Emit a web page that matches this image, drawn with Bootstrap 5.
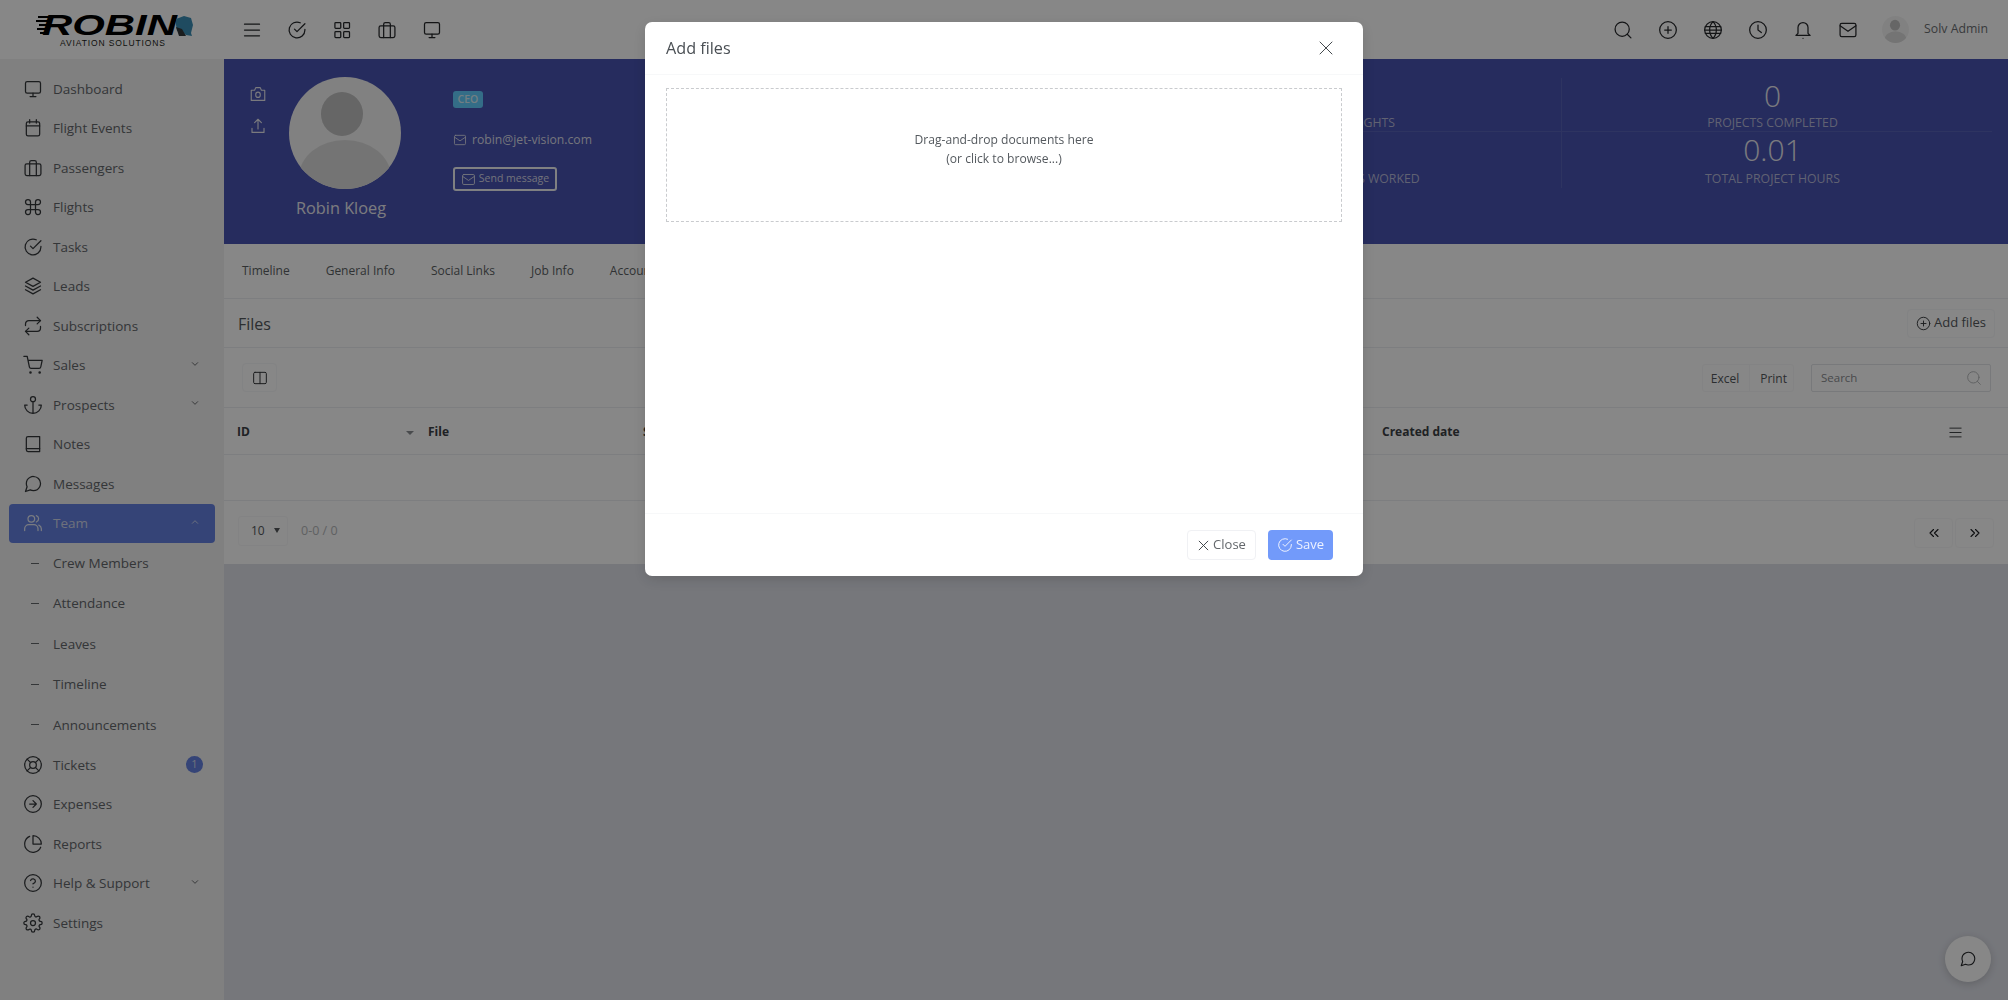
<!DOCTYPE html>
<html lang="en">
<head>
<meta charset="utf-8">
<title>Team member files</title>
<link href="https://cdn.jsdelivr.net/npm/bootstrap@5.3.0/dist/css/bootstrap.min.css" rel="stylesheet">
<style>
body{font-family:"Open Sans","Liberation Sans",sans-serif;font-size:12px;color:#3f4448;background:#dfe1e9;overflow:hidden}
.ic{width:20px;height:20px;fill:none;stroke:currentColor;stroke-width:1.5;stroke-linecap:round;stroke-linejoin:round;flex:none}
.app-shell{height:100vh}
.top-strip{height:59px;background:#fff;flex:none}
.brand-box{width:224px;flex:none}
.tool-ic{color:#26282b;width:45px}
.tool-set{padding-left:5px}
.right-set{padding-right:20px}
.right-set .ic{color:#26282b}
.right-set .tool-ic{width:45px}
.mini-avatar{width:27px;height:27px;margin:0 15px 0 12px}
.admin-name{font-size:12.3px;color:#6c6f73}
.side-col{width:224px;flex:none;background:#f1f1f1;padding:10px 9px 0}
.side-link{height:39.5px;padding:0 14px;color:#63676b;font-size:13.5px;gap:10px;border-radius:4px}
.side-link .ic{color:#34373a}
.side-link.is-on{background:#6480e0;color:#d0d6ea}
.side-link.is-on .ic{color:#e4e8f4}
.side-sub{height:40.4px;color:#63676b;font-size:13.5px;padding:0 14px 0 22px;gap:14px}
.sub-dash{width:8px;height:1px;background:#63676b}
.side-link .chev{width:8px;height:8px;margin-left:auto;margin-right:2px;margin-top:-3px;color:#4a4d50;stroke-width:2.4}
.side-link.is-on .chev{color:#e4e8f4}
.tick-pill{width:17px;height:17px;margin-left:auto;margin-right:-2px;background:#6480e0;color:#d0d6ea;font-size:11px;border-radius:50%}
.hero-band{height:185px;background:#4853b1;color:#fff;flex:none}
.hero-tools{width:67px;padding-top:26px;gap:14px;color:#e6e7ee}
.hero-tools .ic{width:18px;height:18px}
.hero-face{width:112px;margin-top:18px;margin-right:52px;margin-left:-2px}
.hero-name{font-size:16.3px;color:#e8e9f0;margin-top:7px;margin-left:-8px;white-space:nowrap;line-height:24px}
.hero-info{padding-top:32px;width:200px}
.role-tag{width:30px;height:17px;background:#62cfff;color:#d8eef8;font-size:10.5px;font-weight:600;border-radius:3px;margin-bottom:23px}
.mail-line{font-size:12.2px;color:#dcdeea;gap:5px;line-height:18px;margin-bottom:18px}
.mail-line .ic{width:14px;height:14px}
.send-btn{width:104px;height:24px;border:2px solid #f0f1f6;border-radius:3px;color:#d8dae8;font-size:10.5px;gap:3px;padding:0;background:transparent}
.send-btn .ic{width:15px;height:15px}
.stat-grid{margin-left:auto;margin-right:16px;margin-top:19px;width:851px;height:110px;display:grid;grid-template-columns:421px 430px;grid-template-rows:54px 56px}
.stat-cell{text-align:center;border-right:1px solid rgba(255,255,255,.09);border-bottom:1px solid rgba(255,255,255,.09);white-space:nowrap}
.stat-cell.end-c{border-right:0;padding-right:9px}
.stat-cell.low-r{border-bottom:0}
.stat-num{font-size:30px;line-height:36px;color:#e8e9f0;font-weight:300}
.stat-lab{font-size:12.3px;line-height:17px;color:#b6b9d8}
.low-r .stat-lab{margin-top:2px}
.main-col{min-width:0}
.white-sheet{background:#fff;height:320px;flex:none}
.tab-strip{height:55px;padding-left:18px;gap:36px;border-bottom:1px solid #eceef2;color:#5b5f63;font-size:12px}
.sheet-head{height:49px;padding:0 13px 0 14px;border-bottom:1px solid #eceef2}
.sheet-head h5{font-size:16px;font-weight:400;margin:0;padding-top:3px;color:#53575b}
.plain-btn{border:1px solid #f6f7f9;border-radius:4px;background:#fff;color:#53575b;font-size:13px;padding:0}
.add-btn{width:88px;height:29px;gap:3px;font-size:13px}
.add-btn .ic{width:15px;height:15px;color:#34373a}
.tool-row{height:60px;padding:0 17px 0 18px;border-bottom:1px solid #eceef2}
.col-btn{width:35px;height:29px}
.col-btn .ic{width:16px;height:16px;color:#34373a}
.exp-group{height:28px;border:1px solid #f8f8fa;border-radius:3px;margin-right:17px}
.exp-group span{padding:0 10px 0 8px;color:#53575b;font-size:12px;line-height:28px}
.exp-group span+span{border-left:1px solid #f8f8fa;padding:0 6px 0 10px}
.search-box{width:180px;height:28px;border:1px solid #e2e4e8;border-radius:2px;padding:0 8px 0 9px;color:#8a8d90;font-size:11.5px}
.search-box .ic{width:16px;height:16px;color:#b9bbbd;margin-left:auto}
table.files-tb{table-layout:fixed;width:1784px;margin:0}
.files-tb th,.files-tb td{height:46px;padding:0 13px;vertical-align:middle;border-bottom:1px solid #eceef2;border-top:0;background:transparent}
.files-tb th{font-weight:700;font-size:12px;color:#3c4044;position:relative;padding-top:2px}
.sort-caret{position:absolute;right:1px;top:23px;width:0;height:0;border-left:4px solid transparent;border-right:4px solid transparent;border-top:4px solid #8b8e92}
.menu-cell{text-align:center}
.menu-cell .ic{width:15px;height:15px;color:#34373a}
.pager-row{height:64px;padding:0 14px 0 14px}
.size-sel{width:50px;height:30px;border:1px solid #f8f8fa;border-radius:3px;font-size:12px;color:#53575b;padding:0 7px 0 12px;justify-content:space-between;margin-right:13px;margin-bottom:4px}
.size-sel i{width:0;height:0;border-left:3px solid transparent;border-right:3px solid transparent;border-top:5px solid #53575b}
.count-txt{color:#b5b7ba;font-size:12.5px;margin-bottom:2px}
.page-btn{width:39px;height:30px;margin-left:2px;border-color:#f8f8fa}
.page-btn .ic{width:12px;height:12px;color:#1a1c1f;stroke-width:2.2}
.chat-fab{position:fixed;right:17px;bottom:18px;width:46px;height:46px;border-radius:50%;background:#fff;color:#26282b;box-shadow:0 2px 8px rgba(0,0,0,.18)}
.chat-fab .ic{width:18px;height:18px}
.modal-backdrop.show{opacity:.47}
.files-dialog{width:718px;max-width:718px;margin:22px auto 0}
.files-dialog .modal-content{border:0;border-radius:7px;height:554px;box-shadow:0 4px 14px rgba(0,0,0,.14)}
.files-dialog .modal-header{height:53px;padding:0 21px;border-bottom:1px solid #f7f8f9}
.files-dialog .modal-title{font-size:16.2px;font-weight:400;color:#4a4f54}
.x-btn{width:18px;height:18px;padding:0;border:0;background:none;color:#3f4448;margin-right:7px}
.x-btn .ic{width:18px;height:18px;stroke-width:1.3}
.files-dialog .modal-body{padding:13px 21px 0}
.drop-zone{height:134px;border:1px dashed #c9cbce;color:#54595e;font-size:12.1px;line-height:18.5px;padding-top:42px}
.files-dialog .modal-footer{height:63px;padding:0 30px 0 0;border-top:1px solid #f7f8f9;gap:12px;margin-top:auto}
.files-dialog .modal-footer>*{margin:0}
.close-btn{width:69px;height:30px;gap:3px;font-size:13px;color:#63676b;border-color:#f0f1f4}
.close-btn .ic{width:13px;height:13px;color:#3f4448;stroke-width:1.8}
.save-btn{width:65px;height:30px;gap:3px;font-size:13px;background:#729afa;border:0;border-radius:4px;color:#eef2ff;padding:0}
.save-btn .ic{width:16px;height:16px}
</style>
</head>
<body>
<svg width="0" height="0" class="position-absolute">
<defs>
<symbol id="i-monitor" viewBox="0 0 24 24"><rect x="3" y="3" width="18" height="14" rx="2"/><path d="M12 17v4M8.5 21h7"/></symbol>
<symbol id="i-cal" viewBox="0 0 24 24"><rect x="4" y="4.5" width="16" height="17" rx="2"/><path d="M8 2v4M16 2v4M4 9.5h16"/></symbol>
<symbol id="i-case" viewBox="0 0 24 24"><rect x="2.5" y="7" width="19" height="14" rx="2"/><path d="M8 21V5a2 2 0 0 1 2-2h4a2 2 0 0 1 2 2v16"/></symbol>
<symbol id="i-cmd" viewBox="0 0 24 24"><path d="M18 3a3 3 0 0 0-3 3v12a3 3 0 0 0 3 3 3 3 0 0 0 3-3 3 3 0 0 0-3-3H6a3 3 0 0 0-3 3 3 3 0 0 0 3 3 3 3 0 0 0 3-3V6a3 3 0 0 0-3-3 3 3 0 0 0-3 3 3 3 0 0 0 3 3h12a3 3 0 0 0 3-3 3 3 0 0 0-3-3z"/></symbol>
<symbol id="i-check" viewBox="0 0 24 24"><path d="M21.5 11.2V12a9.5 9.5 0 1 1-5.6-8.7"/><path d="M21.5 4.5 12 14l-3-3"/></symbol>
<symbol id="i-layers" viewBox="0 0 24 24"><path d="M12 2.5 3 7.5l9 5 9-5z"/><path d="m3 12 9 5 9-5M3 16.5l9 5 9-5"/></symbol>
<symbol id="i-repeat" viewBox="0 0 24 24"><path d="m17 1.5 4 4-4 4"/><path d="M3 11.5v-2a4 4 0 0 1 4-4h14"/><path d="m7 22.5-4-4 4-4"/><path d="M21 12.5v2a4 4 0 0 1-4 4H3"/></symbol>
<symbol id="i-cart" viewBox="0 0 24 24"><circle cx="9" cy="21" r=".8"/><circle cx="20" cy="21" r=".8"/><path d="M1 1.5h4l2.7 13a2 2 0 0 0 2 1.5h9.6a2 2 0 0 0 2-1.6L23 6.5H6"/></symbol>
<symbol id="i-anchor" viewBox="0 0 24 24"><circle cx="12" cy="5" r="3"/><path d="M12 22V8M5 12H2a10 10 0 0 0 20 0h-3"/></symbol>
<symbol id="i-book" viewBox="0 0 24 24"><path d="M6 3h14v18H6a2 2 0 0 1-2-2V5a2 2 0 0 1 2-2z"/><path d="M4 17.5h16"/></symbol>
<symbol id="i-msg" viewBox="0 0 24 24"><path d="M21 11.5a8.38 8.38 0 0 1-.9 3.8 8.5 8.5 0 0 1-7.6 4.7 8.38 8.38 0 0 1-3.8-.9L3 21l1.9-5.7a8.38 8.38 0 0 1-.9-3.8 8.5 8.5 0 0 1 4.7-7.6 8.38 8.38 0 0 1 3.8-.9h.5a8.48 8.48 0 0 1 8 8v.5z"/></symbol>
<symbol id="i-users" viewBox="0 0 24 24"><circle cx="10" cy="7" r="4"/><path d="M2 21v-2a5 5 0 0 1 5-5h6a5 5 0 0 1 5 5v2"/><path d="M16 3.2a4 4 0 0 1 0 7.6M22 21v-2a5 5 0 0 0-3-4.5"/></symbol>
<symbol id="i-buoy" viewBox="0 0 24 24"><circle cx="12" cy="12" r="10"/><circle cx="12" cy="12" r="4"/><path d="m4.9 4.9 4.3 4.3M14.8 14.8l4.3 4.3M14.8 9.2l4.3-4.3M4.9 19.1l4.3-4.3"/></symbol>
<symbol id="i-arrow" viewBox="0 0 24 24"><circle cx="12" cy="12" r="10"/><path d="m12 8 4 4-4 4M8 12h8"/></symbol>
<symbol id="i-pie" viewBox="0 0 24 24"><path d="M21.2 15.9A10 10 0 1 1 8 2.8"/><path d="M22 12A10 10 0 0 0 12 2v10z"/></symbol>
<symbol id="i-help" viewBox="0 0 24 24"><circle cx="12" cy="12" r="10"/><path d="M9.1 9a3 3 0 0 1 5.8 1c0 2-3 3-3 3M12 17h.01"/></symbol>
<symbol id="i-gear" viewBox="0 0 24 24"><path d="M12 15a3 3 0 1 0 0-6 3 3 0 0 0 0 6z"/><path d="M19.4 15a1.65 1.65 0 0 0 .33 1.82l.06.06a2 2 0 0 1 0 2.83 2 2 0 0 1-2.83 0l-.06-.06a1.65 1.65 0 0 0-1.82-.33 1.65 1.65 0 0 0-1 1.51V21a2 2 0 0 1-2 2 2 2 0 0 1-2-2v-.09A1.65 1.65 0 0 0 9 19.4a1.65 1.65 0 0 0-1.82.33l-.06.06a2 2 0 0 1-2.83 0 2 2 0 0 1 0-2.83l.06-.06a1.65 1.65 0 0 0 .33-1.82 1.65 1.65 0 0 0-1.51-1H3a2 2 0 0 1-2-2 2 2 0 0 1 2-2h.09A1.65 1.65 0 0 0 4.6 9a1.65 1.65 0 0 0-.33-1.82l-.06-.06a2 2 0 0 1 0-2.83 2 2 0 0 1 2.83 0l.06.06a1.65 1.65 0 0 0 1.82.33H9a1.65 1.65 0 0 0 1-1.51V3a2 2 0 0 1 2-2 2 2 0 0 1 2 2v.09a1.65 1.65 0 0 0 1 1.51 1.65 1.65 0 0 0 1.82-.33l.06-.06a2 2 0 0 1 2.83 0 2 2 0 0 1 0 2.83l-.06.06a1.65 1.65 0 0 0-.33 1.82V9a1.65 1.65 0 0 0 1.51 1H21a2 2 0 0 1 2 2 2 2 0 0 1-2 2h-.09a1.65 1.65 0 0 0-1.51 1z"/></symbol>
<symbol id="i-menu" viewBox="0 0 24 24"><path d="M3 5h18M3 12h18M3 19h18"/></symbol>
<symbol id="i-grid" viewBox="0 0 24 24"><rect x="3.5" y="3" width="7" height="7" rx="1"/><rect x="14" y="3" width="7" height="7" rx="1"/><rect x="3.5" y="14" width="7" height="7" rx="1"/><rect x="14" y="14" width="7" height="7" rx="1"/></symbol>
<symbol id="i-search" viewBox="0 0 24 24"><circle cx="11" cy="11" r="8.5"/><path d="m21.5 21.5-4.4-4.4"/></symbol>
<symbol id="i-plus" viewBox="0 0 24 24"><circle cx="12" cy="12" r="10"/><path d="M12 8v8M8 12h8"/></symbol>
<symbol id="i-globe" viewBox="0 0 24 24"><circle cx="12" cy="12" r="10"/><path d="M2 12h20M2.8 8h18.4M2.8 16h18.4M12 2c3 3 4 6.500 4 10s-1 7-4 10c-3-3-4-6.500-4-10s1-7 4-10z"/></symbol>
<symbol id="i-clock" viewBox="0 0 24 24"><circle cx="12" cy="12" r="10"/><path d="M12 6v6l4 3"/></symbol>
<symbol id="i-bell" viewBox="0 0 24 24"><path d="M18 16V9A6 6 0 0 0 6 9v7l-2.500 2.500h17z"/><path d="M12 22h.01"/></symbol>
<symbol id="i-mail" viewBox="0 0 24 24"><rect x="2.500" y="4" width="19" height="16" rx="2"/><path d="m2.500 7 9.500 6.500L21.500 7"/></symbol>
<symbol id="i-camera" viewBox="0 0 24 24"><path d="M3 7h4.500l1.500-3.500h6L16.500 7H21v13.500H3z"/><rect x="9" y="9.500" width="6" height="7" rx="3"/></symbol>
<symbol id="i-upload" viewBox="0 0 24 24"><path d="M4 15v5.500h16V15M12 16V3M7.500 7.500 12 3l4.500 4.500"/></symbol>
<symbol id="i-cols" viewBox="0 0 24 24"><rect x="2.500" y="3.500" width="19" height="17" rx="2"/><path d="M12 3.500v17"/></symbol>
<symbol id="i-x" viewBox="0 0 24 24"><path d="M4 4l16 16M20 4 4 20"/></symbol>
<symbol id="i-down" viewBox="0 0 24 24"><path d="m4 8 8 8 8-8"/></symbol>
<symbol id="i-up" viewBox="0 0 24 24"><path d="m4 16 8-8 8 8"/></symbol>
<symbol id="i-dl" viewBox="0 0 24 24"><path d="m11 5-7 7 7 7M20 5l-7 7 7 7"/></symbol>
<symbol id="i-dr" viewBox="0 0 24 24"><path d="m4 5 7 7-7 7M13 5l7 7-7 7"/></symbol>
</defs>
</svg>

<div class="app-shell d-flex flex-column">
  <header class="top-strip d-flex align-items-center">
    <div class="brand-box">
      <svg width="224" height="59" viewBox="0 0 224 59" role="img" aria-label="Robin Aviation Solutions">
        <path d="M38 17h18M36 21h16M39 25h11M37 29h10M40 33h5" stroke="#000" stroke-width="2" fill="none"/>
        <text x="42" y="35" font-family="Liberation Sans" font-weight="700" font-style="italic" font-size="30" textLength="135" lengthAdjust="spacingAndGlyphs" fill="#000">ROBIN</text>
        <path d="M176 19l8-3 7 2 2 7-2 8 1 3-6-1-4-3-5-1-1-6z" fill="#3b8fb5"/>
        <path d="M176 27l6 2 4 7-7 0z" fill="#33373a"/>
        <text x="60" y="46" font-family="Liberation Sans" font-size="8.500" textLength="105" fill="#1c1e20">AVIATION SOLUTIONS</text>
      </svg>
    </div>
    <div class="tool-set d-flex align-items-center">
      <span class="tool-ic d-flex justify-content-center"><svg class="ic"><use href="#i-menu"/></svg></span>
      <span class="tool-ic d-flex justify-content-center"><svg class="ic"><use href="#i-check"/></svg></span>
      <span class="tool-ic d-flex justify-content-center"><svg class="ic"><use href="#i-grid"/></svg></span>
      <span class="tool-ic d-flex justify-content-center"><svg class="ic"><use href="#i-case"/></svg></span>
      <span class="tool-ic d-flex justify-content-center"><svg class="ic"><use href="#i-monitor"/></svg></span>
    </div>
    <div class="right-set d-flex align-items-center ms-auto">
      <span class="tool-ic d-flex justify-content-center"><svg class="ic"><use href="#i-search"/></svg></span>
      <span class="tool-ic d-flex justify-content-center"><svg class="ic"><use href="#i-plus"/></svg></span>
      <span class="tool-ic d-flex justify-content-center"><svg class="ic"><use href="#i-globe"/></svg></span>
      <span class="tool-ic d-flex justify-content-center"><svg class="ic"><use href="#i-clock"/></svg></span>
      <span class="tool-ic d-flex justify-content-center"><svg class="ic"><use href="#i-bell"/></svg></span>
      <span class="tool-ic d-flex justify-content-center"><svg class="ic"><use href="#i-mail"/></svg></span>
      <svg class="mini-avatar" viewBox="0 0 112 112"><defs><clipPath id="c1"><circle cx="56" cy="56" r="56"/></clipPath></defs><circle cx="56" cy="56" r="56" fill="#f4f4f4"/><g clip-path="url(#c1)"><ellipse cx="54" cy="38" rx="21" ry="22" fill="#c0c0c0"/><ellipse cx="56" cy="100" rx="46" ry="37" fill="#dcdcdc"/></g></svg>
      <span class="admin-name">Solv Admin</span>
    </div>
  </header>
  <div class="d-flex flex-grow-1" style="min-height:0">
    <nav class="side-col">
      <a class="side-link d-flex align-items-center text-decoration-none"><svg class="ic"><use href="#i-monitor"/></svg>Dashboard</a>
      <a class="side-link d-flex align-items-center text-decoration-none"><svg class="ic"><use href="#i-cal"/></svg>Flight Events</a>
      <a class="side-link d-flex align-items-center text-decoration-none"><svg class="ic"><use href="#i-case"/></svg>Passengers</a>
      <a class="side-link d-flex align-items-center text-decoration-none"><svg class="ic"><use href="#i-cmd"/></svg>Flights</a>
      <a class="side-link d-flex align-items-center text-decoration-none"><svg class="ic"><use href="#i-check"/></svg>Tasks</a>
      <a class="side-link d-flex align-items-center text-decoration-none"><svg class="ic"><use href="#i-layers"/></svg>Leads</a>
      <a class="side-link d-flex align-items-center text-decoration-none"><svg class="ic"><use href="#i-repeat"/></svg>Subscriptions</a>
      <a class="side-link d-flex align-items-center text-decoration-none"><svg class="ic"><use href="#i-cart"/></svg>Sales<svg class="ic chev"><use href="#i-down"/></svg></a>
      <a class="side-link d-flex align-items-center text-decoration-none"><svg class="ic"><use href="#i-anchor"/></svg>Prospects<svg class="ic chev"><use href="#i-down"/></svg></a>
      <a class="side-link d-flex align-items-center text-decoration-none"><svg class="ic"><use href="#i-book"/></svg>Notes</a>
      <a class="side-link d-flex align-items-center text-decoration-none"><svg class="ic"><use href="#i-msg"/></svg>Messages</a>
      <a class="side-link is-on d-flex align-items-center text-decoration-none"><svg class="ic"><use href="#i-users"/></svg>Team<svg class="ic chev"><use href="#i-up"/></svg></a>
      <a class="side-sub d-flex align-items-center text-decoration-none"><span class="sub-dash"></span>Crew Members</a>
      <a class="side-sub d-flex align-items-center text-decoration-none"><span class="sub-dash"></span>Attendance</a>
      <a class="side-sub d-flex align-items-center text-decoration-none"><span class="sub-dash"></span>Leaves</a>
      <a class="side-sub d-flex align-items-center text-decoration-none"><span class="sub-dash"></span>Timeline</a>
      <a class="side-sub d-flex align-items-center text-decoration-none"><span class="sub-dash"></span>Announcements</a>
      <a class="side-link d-flex align-items-center text-decoration-none"><svg class="ic"><use href="#i-buoy"/></svg>Tickets<span class="tick-pill d-flex align-items-center justify-content-center">1</span></a>
      <a class="side-link d-flex align-items-center text-decoration-none"><svg class="ic"><use href="#i-arrow"/></svg>Expenses</a>
      <a class="side-link d-flex align-items-center text-decoration-none"><svg class="ic"><use href="#i-pie"/></svg>Reports</a>
      <a class="side-link d-flex align-items-center text-decoration-none"><svg class="ic"><use href="#i-help"/></svg>Help &amp; Support<svg class="ic chev"><use href="#i-down"/></svg></a>
      <a class="side-link d-flex align-items-center text-decoration-none"><svg class="ic"><use href="#i-gear"/></svg>Settings</a>
    </nav>
    <main class="main-col flex-grow-1 d-flex flex-column">
      <section class="hero-band d-flex">
        <div class="hero-tools d-flex flex-column align-items-center"><svg class="ic"><use href="#i-camera"/></svg><svg class="ic"><use href="#i-upload"/></svg></div>
        <div class="hero-face d-flex flex-column align-items-center">
          <svg width="112" height="112" viewBox="0 0 112 112"><defs><clipPath id="c2"><circle cx="56" cy="56" r="56"/></clipPath></defs><circle cx="56" cy="56" r="56" fill="#f4f4f4"/><g clip-path="url(#c2)"><ellipse cx="53" cy="37" rx="21" ry="22" fill="#c0c0c0"/><ellipse cx="56" cy="100" rx="46" ry="37" fill="#dcdcdc"/></g></svg>
          <div class="hero-name">Robin Kloeg</div>
        </div>
        <div class="hero-info">
          <div class="role-tag d-flex align-items-center justify-content-center">CEO</div>
          <div class="mail-line d-flex align-items-center"><svg class="ic"><use href="#i-mail"/></svg>robin@jet-vision.com</div>
          <button class="send-btn d-flex align-items-center justify-content-center" type="button"><svg class="ic"><use href="#i-mail"/></svg>Send message</button>
        </div>
        <div class="stat-grid">
          <div class="stat-cell"><div class="stat-num">0</div><div class="stat-lab">TOTAL FLIGHTS</div></div>
          <div class="stat-cell end-c"><div class="stat-num">0</div><div class="stat-lab">PROJECTS COMPLETED</div></div>
          <div class="stat-cell low-r"><div class="stat-num">0</div><div class="stat-lab">TOTAL HOURS WORKED</div></div>
          <div class="stat-cell end-c low-r"><div class="stat-num">0.01</div><div class="stat-lab">TOTAL PROJECT HOURS</div></div>
        </div>
      </section>
      <section class="white-sheet">
        <div class="tab-strip d-flex align-items-center"><span>Timeline</span><span>General Info</span><span>Social Links</span><span>Job Info</span><span>Account</span></div>
        <div class="sheet-head d-flex align-items-center justify-content-between"><h5>Files</h5><button class="plain-btn add-btn d-flex align-items-center justify-content-center" type="button"><svg class="ic"><use href="#i-plus"/></svg>Add files</button></div>
        <div class="tool-row d-flex align-items-center">
          <button class="plain-btn col-btn d-flex align-items-center justify-content-center" type="button" aria-label="Columns"><svg class="ic"><use href="#i-cols"/></svg></button>
          <div class="exp-group d-flex ms-auto"><span>Excel</span><span>Print</span></div>
          <div class="search-box d-flex align-items-center">Search<svg class="ic"><use href="#i-search"/></svg></div>
        </div>
        <table class="table files-tb">
          <colgroup><col style="width:191px"><col style="width:215px"><col style="width:370px"><col style="width:369px"><col style="width:533px"><col style="width:106px"></colgroup>
          <thead><tr><th>ID<span class="sort-caret"></span></th><th>File</th><th>Size</th><th>Uploaded by</th><th>Created date</th><th class="menu-cell"><svg class="ic"><use href="#i-menu"/></svg></th></tr></thead>
          <tbody><tr><td colspan="6"></td></tr></tbody>
        </table>
        <div class="pager-row d-flex align-items-center">
          <div class="size-sel d-flex align-items-center"><span>10</span><i></i></div>
          <span class="count-txt">0-0 / 0</span>
          <button class="plain-btn page-btn d-flex align-items-center justify-content-center ms-auto" type="button" aria-label="Previous"><svg class="ic"><use href="#i-dl"/></svg></button>
          <button class="plain-btn page-btn d-flex align-items-center justify-content-center" type="button" aria-label="Next"><svg class="ic"><use href="#i-dr"/></svg></button>
        </div>
      </section>
    </main>
  </div>
</div>
<button class="chat-fab btn p-0 d-flex align-items-center justify-content-center" type="button" aria-label="Chat"><svg class="ic"><use href="#i-msg"/></svg></button>

<div class="modal-backdrop show"></div>
<div class="modal d-block" tabindex="-1">
  <div class="modal-dialog files-dialog">
    <div class="modal-content">
      <div class="modal-header">
        <h5 class="modal-title">Add files</h5>
        <button class="x-btn ms-auto d-flex" type="button" aria-label="Close"><svg class="ic"><use href="#i-x"/></svg></button>
      </div>
      <div class="modal-body flex-grow-0">
        <div class="drop-zone text-center">Drag-and-drop documents here<br>(or click to browse...)</div>
      </div>
      <div class="modal-footer">
        <button class="plain-btn close-btn d-flex align-items-center justify-content-center" type="button"><svg class="ic"><use href="#i-x"/></svg>Close</button>
        <button class="save-btn d-flex align-items-center justify-content-center" type="button"><svg class="ic"><use href="#i-check"/></svg>Save</button>
      </div>
    </div>
  </div>
</div>
<script src="https://cdn.jsdelivr.net/npm/bootstrap@5.3.0/dist/js/bootstrap.bundle.min.js"></script>
</body>
</html>
